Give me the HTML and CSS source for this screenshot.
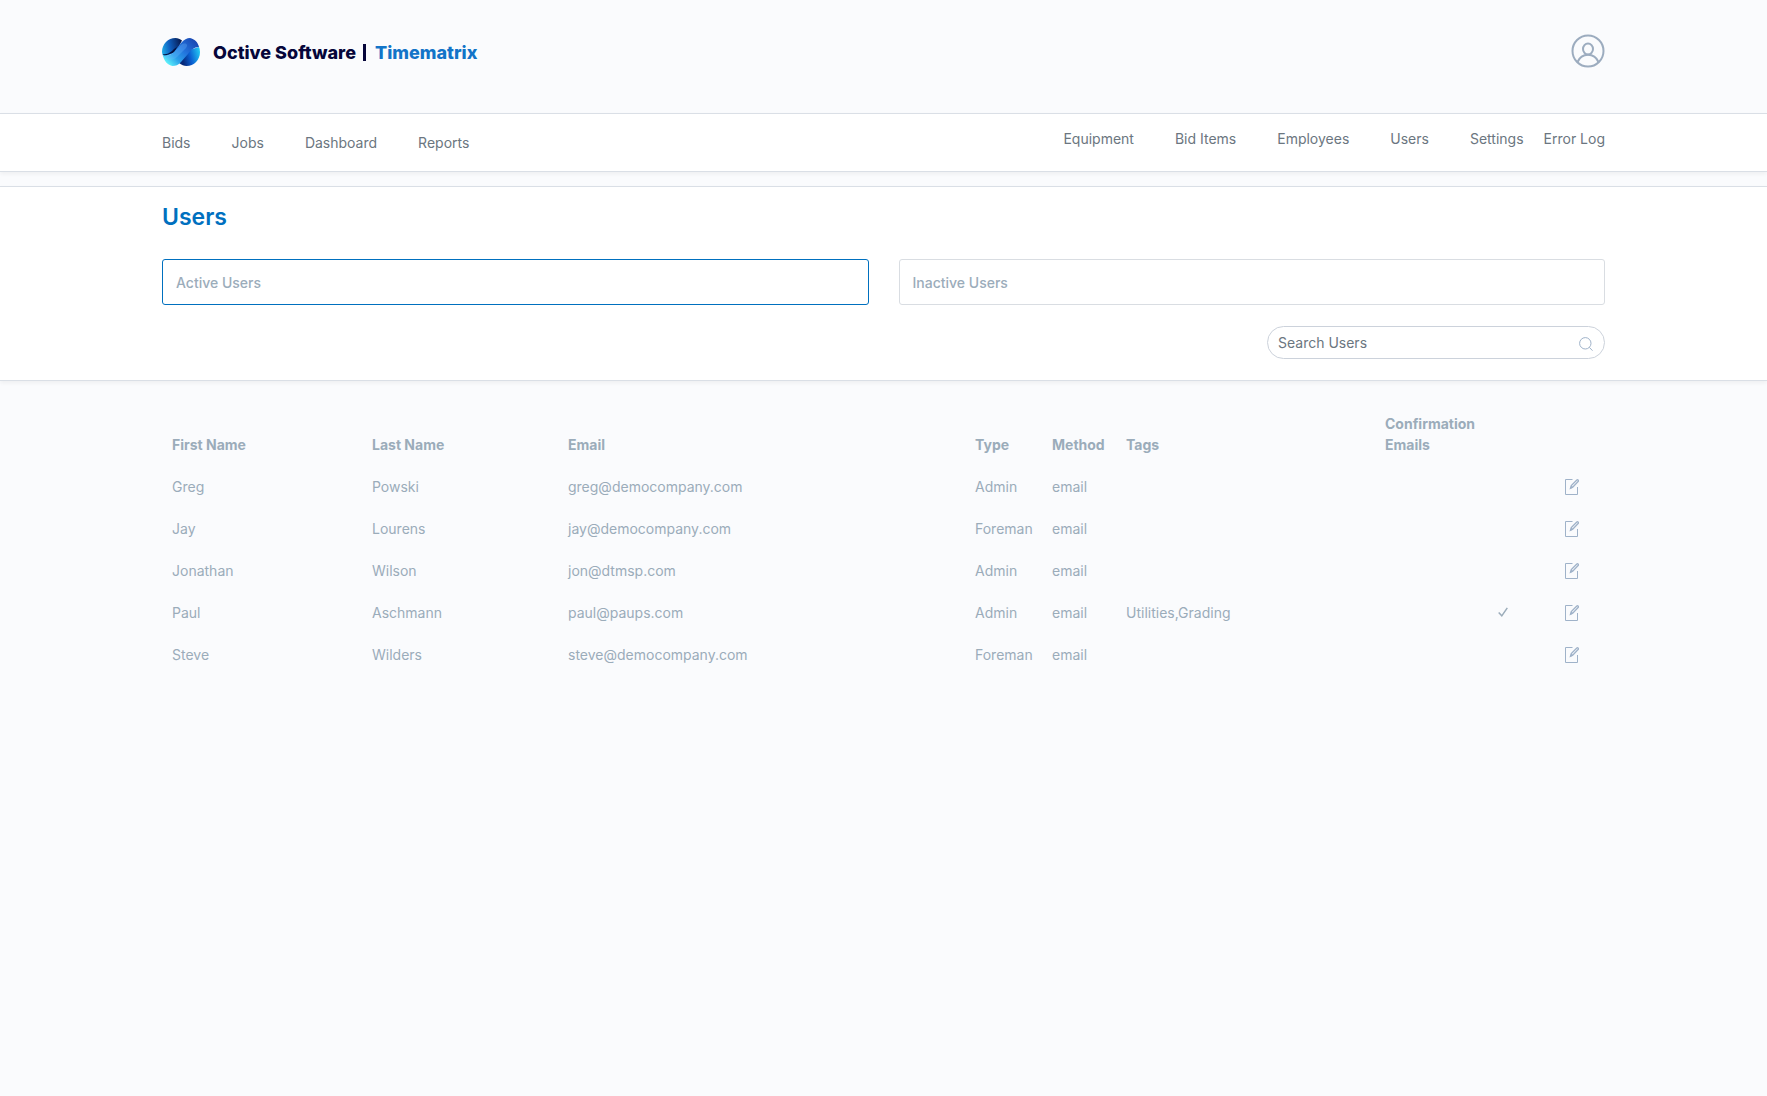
FILE: index.html
```html
<!DOCTYPE html>
<html lang="en">
<head>
<meta charset="utf-8">
<meta name="viewport" content="width=device-width, initial-scale=1">
<title>Users | Timematrix</title>
<link rel="stylesheet" href="styles.css">
</head>
<body>
<svg class="sprite" aria-hidden="true">
  <symbol id="edit" viewBox="0 0 14 16">
    <g fill="none" stroke="currentColor">
      <path d="M7.500 .5H.5V15.500H12.500V8"/>
      <path stroke-width="1.300" d="M5.500 9.200L6.300 6.500L11.800 1Q12.600 .4 13.200 1.100Q13.800 1.800 13.100 2.500L7.700 8.200Z"/>
      <path stroke-width="1.500" d="M5.500 9.200L7.200 7.300"/>
    </g>
  </symbol>
</svg>

<header class="header wrap">
  <a class="brand" href="#">
    <svg class="brand-mark" viewBox="0 0 38 28" aria-hidden="true">
      <defs>
        <linearGradient id="upper" gradientUnits="userSpaceOnUse" x1="0" y1="12" x2="20" y2="8">
          <stop offset="0" stop-color="#1fa9e6"/><stop offset=".4" stop-color="#0f5fc0"/><stop offset="1" stop-color="#06194f"/>
        </linearGradient>
        <linearGradient id="band" gradientUnits="userSpaceOnUse" x1="6" y1="27" x2="32" y2="2">
          <stop offset="0" stop-color="#5ff5fb"/><stop offset=".3" stop-color="#2a9fea"/><stop offset=".6" stop-color="#2272dc"/><stop offset="1" stop-color="#1a49b4"/>
        </linearGradient>
        <linearGradient id="lower" gradientUnits="userSpaceOnUse" x1="20" y1="20" x2="38" y2="15">
          <stop offset="0" stop-color="#05287a"/><stop offset=".45" stop-color="#0a5fd2"/><stop offset="1" stop-color="#23c6f2"/>
        </linearGradient>
      </defs>
      <path fill="url(#upper)" d="M0 14C0 6 6 0 13.500 0C16 0 18 1 20 2.500L14 14L2 19Q0 17 0 14Z"/>
      <path fill="url(#lower)" d="M38 14C38 22 32 28 24.500 28C22 28 19.500 27 17 25L24 13L37 9Q38 11 38 14Z"/>
      <path fill="#04103f" d="M1 16C6 17 9 14 12 11L15 9L13 14L2 18Z"/>
      <path fill="url(#band)" d="M1 17C5 18.500 9 17 12 14L19 5C22 1.500 25 0 28 0C32.500 1 36 4 37 9C32 9 29 12 26 16L19 24C16 27 14 28 10.500 28C6 27 1.500 23 1 17Z"/>
      <path fill="#6fb9ff" fill-opacity=".3" d="M1 17C5 18.500 9 17 12 14L19 7C23 4 27 6 24 10L15 19C11 23 5 23 1 17Z"/>
    </svg>
    <span class="brand-company">Octive Software</span>
    <span class="brand-bar"></span>
    <span class="brand-product">Timematrix</span>
  </a>
  <button class="profile" type="button" aria-label="Profile">
    <svg viewBox="0 0 34 34" fill="none" stroke="currentColor" stroke-width="2" aria-hidden="true">
      <circle cx="17" cy="17" r="15.500"/>
      <ellipse cx="17" cy="15" rx="5" ry="5.500"/>
      <path d="M6.500 28C8.500 23.500 12 20.800 17 20.800S25.500 23.500 27.500 28"/>
    </svg>
  </button>
</header>

<nav class="nav wrap" aria-label="Main">
  <div class="nav-main">
    <a href="#">Bids</a><a href="#">Jobs</a><a href="#">Dashboard</a><a href="#">Reports</a>
  </div>
  <div class="nav-admin">
    <a href="#">Equipment</a><a href="#">Bid Items</a><a href="#">Employees</a><a href="#">Users</a>
    <div class="nav-pair"><a href="#">Settings</a><a href="#">Error Log</a></div>
  </div>
</nav>

<main>
  <section class="panel wrap">
    <h1>Users</h1>
    <div class="filters">
      <button class="filter filter-active" type="button">Active Users</button>
      <button class="filter" type="button">Inactive Users</button>
    </div>
    <form class="search">
      <input type="text" placeholder="Search Users" aria-label="Search Users">
      <svg viewBox="0 0 14 14" fill="none" stroke="currentColor" aria-hidden="true">
        <circle cx="6.300" cy="6.300" r="5.700"/><path d="M10.300 10.300L13.500 13.700"/>
      </svg>
    </form>
  </section>

  <section class="list wrap">
    <table>
      <colgroup>
        <col class="col-first"><col class="col-last"><col class="col-email"><col class="col-type"><col class="col-method"><col class="col-tags"><col class="col-confirm"><col class="col-edit">
      </colgroup>
      <thead>
        <tr><th>First Name</th><th>Last Name</th><th>Email</th><th>Type</th><th>Method</th><th>Tags</th><th>Confirmation Emails</th><td></td></tr>
      </thead>
      <tbody>
        <tr><td>Greg</td><td>Powski</td><td>greg@democompany.com</td><td>Admin</td><td>email</td><td></td><td></td><td class="edit"><button type="button" aria-label="Edit Greg Powski"><svg><use href="#edit"/></svg></button></td></tr>
        <tr><td>Jay</td><td>Lourens</td><td>jay@democompany.com</td><td>Foreman</td><td>email</td><td></td><td></td><td class="edit"><button type="button" aria-label="Edit Jay Lourens"><svg><use href="#edit"/></svg></button></td></tr>
        <tr><td>Jonathan</td><td>Wilson</td><td>jon@dtmsp.com</td><td>Admin</td><td>email</td><td></td><td></td><td class="edit"><button type="button" aria-label="Edit Jonathan Wilson"><svg><use href="#edit"/></svg></button></td></tr>
        <tr><td>Paul</td><td>Aschmann</td><td>paul@paups.com</td><td>Admin</td><td>email</td><td>Utilities,Grading</td><td class="check"><svg viewBox="0 0 10 10" role="img" aria-label="Yes"><path d="M.7 5.500L3.800 8.800L9.300 .8" fill="none" stroke="currentColor" stroke-width="1.500"/></svg></td><td class="edit"><button type="button" aria-label="Edit Paul Aschmann"><svg><use href="#edit"/></svg></button></td></tr>
        <tr><td>Steve</td><td>Wilders</td><td>steve@democompany.com</td><td>Foreman</td><td>email</td><td></td><td></td><td class="edit"><button type="button" aria-label="Edit Steve Wilders"><svg><use href="#edit"/></svg></button></td></tr>
      </tbody>
    </table>
  </section>
</main>
</body>
</html>
```
FILE: styles.css
```css
* { box-sizing: border-box; }

body {
  margin: 0;
  background: #fafbfd;
  color: #9bacba;
  font: 14px/21px Inter, "Liberation Sans", sans-serif;
}

a { text-decoration: none; color: inherit; }
button { font: inherit; color: inherit; background: none; border: 0; padding: 0; cursor: pointer; }
svg { display: block; }
.sprite { display: none; }

.wrap { padding-left: 162px; padding-right: 162px; }

.header {
  display: flex;
  justify-content: space-between;
  align-items: flex-start;
  padding-top: 34px;
  padding-bottom: 43px;
}
.brand {
  display: flex;
  align-items: center;
  min-height: 36px;
  color: #06063a;
  font-size: 18px;
  font-weight: 800;
}
.brand-mark { width: 38px; height: 28px; margin-right: 13px; }
.brand-bar { width: 3px; height: 17px; margin: 0 9px 0 7px; background: #06063a; }
.brand-product { color: #1274c8; }
.profile { color: #9cacbf; }
.profile svg { width: 34px; height: 34px; }

.nav, .panel {
  background: #fff;
  border-top: 1px solid #dadfe6;
  border-bottom: 1px solid #dadfe6;
  box-shadow: 0 2px 4px rgba(0, 0, 0, .05);
}
.nav {
  display: flex;
  justify-content: space-between;
  padding-top: 14px;
  padding-bottom: 18px;
  color: #6b7680;
}
.nav-main, .nav-admin { display: flex; gap: 41px; }
.nav-main { padding-top: 4px; }
.nav-pair { display: flex; gap: 20px; }

.panel { margin-top: 14px; padding-top: 15px; padding-bottom: 21px; }
h1 {
  margin: 0 0 26px;
  color: #0070bf;
  font-size: 23px;
  line-height: 31px;
  font-weight: 600;
}
.filters { display: grid; grid-template-columns: 1fr 1fr; gap: 30px; }
.filter {
  height: 46px;
  padding: 0 13px;
  border: 1px solid #d9dde2;
  border-radius: 3px;
  text-align: left;
  font-weight: 500;
}
.filter-active { border-color: #0070bf; }
.search { position: relative; width: 338px; margin: 21px 0 0 auto; color: #9fb2c9; }
.search input {
  display: block;
  width: 100%;
  height: 33px;
  padding: 0 36px 0 10px;
  border: 1px solid #ccd2db;
  border-radius: 17px;
  background: #fff;
  color: #6b7680;
  font: inherit;
}
.search input::placeholder { color: #6b7680; opacity: 1; }
.search svg { position: absolute; right: 12px; top: 11px; width: 14px; height: 14px; }

.list { padding-top: 22px; }
table { width: 100%; border-collapse: collapse; table-layout: fixed; }
th, td { height: 42px; padding: 10px; text-align: left; vertical-align: middle; }
th { vertical-align: bottom; font-weight: 700; }
.col-first { width: 200px; }
.col-last { width: 196px; }
.col-email { width: auto; }
.col-type { width: 77px; }
.col-method { width: 74px; }
.col-tags { width: 259px; }
.col-confirm { width: 143px; }
.col-edit { width: 87px; }
.check svg { width: 10px; height: 10px; margin-left: auto; }
.edit { padding-right: 26px; }
.edit button { display: block; margin-left: auto; padding-top: 2px; }
.edit svg { width: 14px; height: 16px; color: #9fb2c9; }

@media (max-width: 1300px) {
  .wrap { padding-left: 32px; padding-right: 32px; }
}
```
